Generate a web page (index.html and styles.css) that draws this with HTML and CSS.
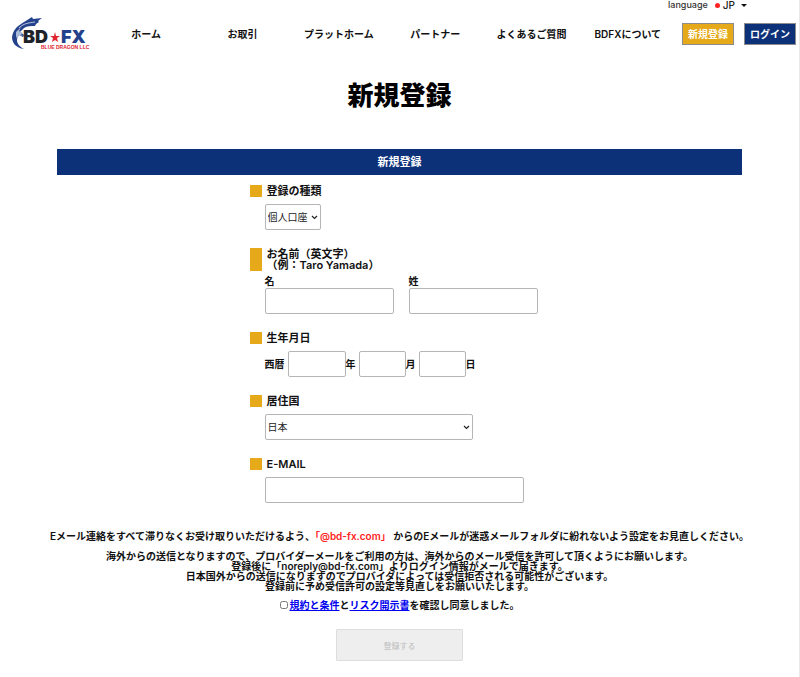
FILE: index.html
```html
<!DOCTYPE html>
<html lang="ja">
<head>
  <meta charset="utf-8">
  <title>新規登録</title>
  <link rel="stylesheet" href="styles.css">
</head>
<body>
  <header class="header">
    <div class="language">
      <span>language</span>
      <button type="button" class="language-button"><span class="flag"></span>JP<span class="caret"></span></button>
    </div>
    <div class="header-row">
      <a href="#" class="logo" aria-label="BD FX">
        <svg width="80" height="34" viewBox="0 0 80 34">
          <path fill="#24418c" d="M32 1l-9 1-1-2C19 2 15 4 11 7 6 10 3 14 2 20c0 6 4 11 12 12-4-2-7-5-7-9 0-2 1-4 2-5l4 2 1-2-4-3 4-4c3-2 7-2 11-2l1-2 3-2-1-1z"/>
          <path fill="#a9b9d8" d="M6 15l5-5-2 4 4 2-2 1 2 2-4-1-2 4-1-3z"/>
          <path fill="none" stroke="#fff" stroke-width=".7" d="M9 11c5-5 10-5 16-6"/>
          <text class="logo-name" x="13" y="26" fill="#20222a">BD</text>
          <path fill="#e0232e" d="M45 15l1 4h4l-3 2 1 4-3-2-3 2 1-4-3-2h4z"/>
          <text class="logo-name" x="51" y="26" fill="#24418c">FX</text>
          <text class="logo-sub" x="31" y="32" fill="#e0232e">BLUE DRAGON LLC</text>
        </svg>
      </a>
      <nav class="nav">
        <a href="#">ホーム</a>
        <a href="#">お取引</a>
        <a href="#">プラットホーム</a>
        <a href="#">パートナー</a>
        <a href="#">よくあるご質問</a>
        <a href="#">BDFXについて</a>
      </nav>
      <div class="header-buttons">
        <a href="#" class="button button-gold">新規登録</a>
        <a href="#" class="button button-blue">ログイン</a>
      </div>
    </div>
  </header>

  <main>
    <h1 class="page-title">新規登録</h1>
    <h2 class="banner">新規登録</h2>

    <form>
      <div class="fields">
        <div class="group">
          <label class="heading" for="type">登録の種類</label>
          <div class="row">
            <select id="type" class="type"><option>個人口座</option><option>法人口座</option></select>
          </div>
        </div>

        <fieldset class="group">
          <legend class="heading">お名前（英文字）<br>（例：Taro Yamada）</legend>
          <div class="row row-name">
            <label>名<input type="text" name="first"></label>
            <label>姓<input type="text" name="last"></label>
          </div>
        </fieldset>

        <fieldset class="group">
          <legend class="heading">生年月日</legend>
          <div class="row row-date">
            <span>西暦</span>
            <input type="text" id="year" class="year">
            <label for="year">年</label>
            <input type="text" id="month">
            <label for="month">月</label>
            <input type="text" id="day">
            <label for="day">日</label>
          </div>
        </fieldset>

        <div class="group">
          <label class="heading" for="country">居住国</label>
          <div class="row">
            <select id="country" class="country"><option>日本</option></select>
          </div>
        </div>

        <div class="group">
          <label class="heading" for="email">E-MAIL</label>
          <div class="row">
            <input type="email" id="email" class="email">
          </div>
        </div>
      </div>

      <div class="notes">
        <p>Eメール連絡をすべて滞りなくお受け取りいただけるよう、<span class="red">「@bd-fx.com」</span> からのEメールが迷惑メールフォルダに紛れないよう設定をお見直しください。</p>
        <p>海外からの送信となりますので、プロバイダーメールをご利用の方は、海外からのメール受信を許可して頂くようにお願いします。<br>
        登録後に「noreply@bd-fx.com」よりログイン情報がメールで届きます。<br>
        日本国外からの送信になりますのでプロバイダによっては受信拒否される可能性がございます。<br>
        登録前に予め受信許可の設定等見直しをお願いいたします。</p>
      </div>

      <div class="agree">
        <input type="checkbox" id="agree">
        <label for="agree"><a href="#">規約と条件</a>と<a href="#">リスク開示書</a>を確認し同意しました。</label>
      </div>

      <button type="submit" class="submit" disabled>登録する</button>
    </form>
  </main>
</body>
</html>
```

FILE: styles.css
```css
* {
  box-sizing: border-box;
}

body {
  margin: 0;
  min-height: 100vh;
  border-right: 1px solid #e8e8e8;
  background-color: #fff;
  color: #111;
  font-family: Inter, "Noto Sans CJK JP", sans-serif;
  font-size: 10px;
  font-weight: 600;
  line-height: 10px;
}

.language {
  display: flex;
  justify-content: flex-end;
  align-items: center;
  gap: 4px;
  height: 10px;
  padding-right: 49px;
  color: #333;
  font-size: 9px;
  font-weight: 500;
}

.language-button {
  display: flex;
  align-items: center;
  padding: 0 3px;
  border: 0;
  background: none;
  color: #222;
  font: inherit;
  font-size: 10px;
}

.flag {
  width: 5px;
  height: 5px;
  margin: 0 3px 0 0;
  border-radius: 50%;
  background-color: #f22;
}

.caret {
  margin-left: 6px;
  border: 3px solid transparent;
  border-top-color: #111;
  border-bottom: 0;
}

.header-row {
  display: flex;
  align-items: center;
  height: 48px;
  padding: 0 3px 0 10px;
}

.logo {
  width: 88px;
  height: 34px;
}

.logo-name {
  font-family: Inter, sans-serif;
  font-size: 18px;
  font-weight: 900;
}

.logo-sub {
  font-family: "Liberation Sans", sans-serif;
  font-size: 5px;
  font-weight: 700;
}

.nav {
  display: grid;
  flex: 1;
  grid-template-columns: repeat(6, 1fr);
  text-align: center;
}

.nav a {
  color: #111;
  text-decoration: none;
  white-space: nowrap;
}

.header-buttons {
  display: flex;
  gap: 10px;
  margin-left: 6px;
}

.button {
  padding: 5px;
  border: 1px solid #8c8c8c;
  color: #fff;
  text-decoration: none;
  white-space: nowrap;
}

.button-gold {
  background-color: #e5a919;
}

.button-blue {
  background-color: #0c3179;
}

.page-title {
  margin: 20px 0 35px;
  color: #000;
  font-size: 26px;
  font-weight: 800;
  line-height: 36px;
  text-align: center;
}

.banner {
  margin: 0 57px;
  background-color: #0c3179;
  color: #fff;
  font-size: 11px;
  line-height: 26px;
  text-align: center;
}

.fields {
  width: 300px;
  margin: 10px auto 0;
}

.group {
  margin: 0 0 18px;
  padding: 0;
  border: 0;
}

.heading {
  display: block;
  padding: 1px 0 0 5px;
  border-left: 12px solid #e5a919;
  font-size: 11px;
  line-height: 11px;
}

.row {
  display: flex;
  margin-top: 7px;
  padding-left: 15px;
}

.row-name {
  gap: 15px;
  margin-top: 5px;
}

.row-name input {
  display: block;
  width: 129px;
  margin-top: 2px;
}

.row-date {
  align-items: center;
}

.row-date input {
  width: 47px;
  margin-left: 3px;
}

.row-date .year {
  width: 58px;
}

input[type="text"],
input[type="email"],
select {
  height: 26px;
  padding: 0 2px;
  border: 1px solid #b5b5b5;
  border-radius: 2px;
  background-color: #fff;
  color: #222;
  font-family: inherit;
  font-size: 10px;
}

select {
  appearance: none;
  background-image: url("data:image/svg+xml,%3Csvg xmlns='http://www.w3.org/2000/svg' width='7' height='5'%3E%3Cpath d='M1 1l2.500 2.500L6 1' fill='none' stroke='%23222' stroke-width='1.200'/%3E%3C/svg%3E");
  background-repeat: no-repeat;
  background-position: right 2px center;
}

.type {
  width: 56px;
}

.country {
  width: 208px;
}

.email {
  width: 259px;
}

.notes {
  margin-top: 28px;
  text-align: center;
}

.notes p {
  margin: 0 0 10px;
}

.red {
  color: #f22;
}

.agree {
  display: flex;
  justify-content: center;
  align-items: center;
  gap: 2px;
  margin-top: -1px;
}

.agree input {
  width: 8px;
  height: 8px;
  margin: 0;
}

.agree a {
  color: #00e;
}

.submit {
  display: block;
  width: 127px;
  height: 32px;
  margin: 19px auto 0;
  border: 1px solid #ddd;
  border-radius: 1px;
  background-color: #eee;
  color: #bbb;
  font-family: inherit;
  font-size: 8px;
}
```
